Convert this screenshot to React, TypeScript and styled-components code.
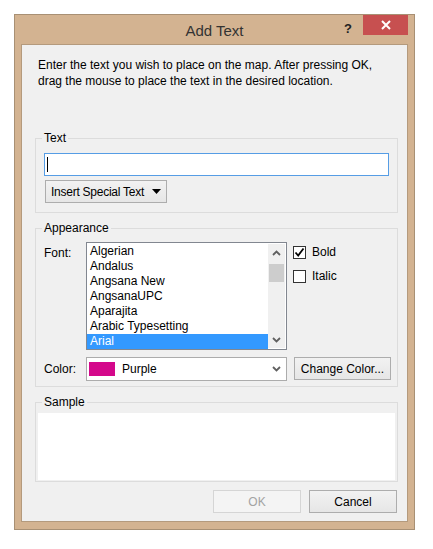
import styled, { createGlobalStyle } from "styled-components";

const GlobalStyle = createGlobalStyle`
  body {
    margin: 0;
    background: #ffffff;
    font-family: "Liberation Sans", Arial, sans-serif;
    font-size: 12px;
    color: #000;
  }
`;

const Page = styled.div`
  padding: 14px;
`;

const Window = styled.div`
  width: 401px;
  height: 516px;
  box-sizing: border-box;
  border: 1px solid #a89074;
  background: #d3b391;
  padding: 0 6px 7px;
  display: flex;
  flex-direction: column;
`;

const TitleBar = styled.div`
  height: 29px;
  display: grid;
  grid-template-columns: 1fr auto 1fr;
  align-items: center;
`;

const Title = styled.div`
  grid-column: 2;
  font-size: 15px;
  color: #333;
  margin-top: 1px;
`;

const Controls = styled.div`
  grid-column: 3;
  align-self: start;
  justify-self: end;
  display: flex;
  align-items: flex-start;
  height: 29px;
`;

const HelpButton = styled.div`
  width: 26px;
  height: 20px;
  font-weight: bold;
  font-size: 13px;
  color: #222;
  display: flex;
  align-items: center;
  justify-content: center;
  padding: 6px 4px 0 0;
  box-sizing: border-box;
`;

const CloseButton = styled.div`
  width: 45px;
  height: 20px;
  background: #c75050;
  display: flex;
  align-items: center;
  justify-content: center;
`;

const Client = styled.div`
  flex: 1;
  background: #f0f0f0;
  border: 1px solid #b49a7d;
  display: flex;
  flex-direction: column;
`;

const Description = styled.p`
  margin: 12px 20px 0 16px;
  line-height: 16px;
`;

const Group = styled.fieldset<{ $top: number }>`
  margin: ${(p) => p.$top}px 9px 0 13px;
  padding: 0;
  border: 1px solid #dcdcdc;
  min-width: 0;
`;

const Legend = styled.legend`
  margin-left: 6px;
  padding: 0 2px;
  line-height: 15px;
`;

const TextBody = styled.div`
  padding: 7px 8px 9px;
`;

const TextBox = styled.div`
  height: 23px;
  box-sizing: border-box;
  border: 1px solid #569de5;
  background: #fff;
  display: flex;
  align-items: center;
  padding-left: 2px;
`;

const Caret = styled.span`
  width: 1px;
  height: 15px;
  background: #000;
`;

const Button = styled.div<{ $disabled?: boolean }>`
  height: 23px;
  box-sizing: border-box;
  border: 1px solid ${(p) => (p.$disabled ? "#d5d5d5" : "#adadad")};
  background: ${(p) =>
    p.$disabled ? "#f4f4f4" : "linear-gradient(#f2f2f2, #e6e6e6)"};
  color: ${(p) => (p.$disabled ? "#a3a3a3" : "#000")};
  display: flex;
  align-items: center;
  justify-content: center;
  white-space: nowrap;
`;

const MenuButton = styled(Button)`
  width: 122px;
  margin: 4px 0 0 1px;
  justify-content: space-between;
  padding: 0 5px 0 5px;
  letter-spacing: -0.25px;
`;

const AppearanceBody = styled.div`
  display: grid;
  grid-template-columns: 36px 201px 1fr;
  column-gap: 6px;
  row-gap: 7px;
  padding: 6px 0 5px 8px;
`;

const FieldLabel = styled.div<{ $center?: boolean }>`
  align-self: ${(p) => (p.$center ? "center" : "start")};
  padding-top: ${(p) => (p.$center ? 0 : 4)}px;
`;

const ListBox = styled.div`
  height: 108px;
  box-sizing: border-box;
  border: 1px solid #828790;
  background: #fff;
  display: flex;
  padding: 1px 1px 1px 0;
`;

const Items = styled.div`
  flex: 1;
`;

const Item = styled.div<{ $selected?: boolean }>`
  height: 15px;
  line-height: 15px;
  padding-left: 3px;
  background: ${(p) => (p.$selected ? "#3399ff" : "transparent")};
  color: ${(p) => (p.$selected ? "#fff" : "#000")};
  white-space: nowrap;
`;

const ScrollBar = styled.div`
  width: 17px;
  background: #f0f0f0;
  display: flex;
  flex-direction: column;
  align-items: center;
`;

const ScrollArrow = styled.div`
  height: 17px;
  width: 17px;
  display: flex;
  align-items: center;
  justify-content: center;
`;

const Track = styled.div`
  flex: 1;
  width: 100%;
  padding: 3px 1px 0;
  box-sizing: border-box;
`;

const Thumb = styled.div`
  height: 18px;
  background: #cdcdcd;
`;

const Checks = styled.div`
  display: flex;
  flex-direction: column;
  gap: 10px;
  padding-top: 3px;
`;

const CheckRow = styled.div`
  display: flex;
  align-items: center;
  gap: 6px;
`;

const CheckBox = styled.div`
  width: 13px;
  height: 13px;
  box-sizing: border-box;
  border: 1px solid #333;
  background: #fff;
  display: flex;
  align-items: center;
  justify-content: center;
`;

const ComboBox = styled.div`
  height: 24px;
  box-sizing: border-box;
  border: 1px solid #acacac;
  background: #fff;
  display: flex;
  align-items: center;
  padding: 0 5px 0 2px;
  gap: 7px;
`;

const Swatch = styled.span<{ $color: string }>`
  width: 26px;
  height: 14px;
  background: ${(p) => p.$color};
`;

const ComboText = styled.span`
  flex: 1;
`;

const ColorButton = styled(Button)`
  width: 97px;
  margin-left: 1px;
`;

const SampleBody = styled.div`
  padding: 3px 2px 1px;
`;

const SampleArea = styled.div`
  height: 67px;
  background: #fff;
`;

const Footer = styled.div`
  display: flex;
  justify-content: flex-end;
  gap: 8px;
  margin: 8px 10px 0 0;
`;

const DialogButton = styled(Button)`
  width: 88px;
`;

const fonts = [
  "Algerian",
  "Andalus",
  "Angsana New",
  "AngsanaUPC",
  "Aparajita",
  "Arabic Typesetting",
  "Arial",
];

const Chevron = ({ up }: { up?: boolean }) => (
  <svg width="9" height="6" viewBox="0 0 9 6">
    <polyline
      points={up ? "1,5 4.5,1.5 8,5" : "1,1 4.5,4.5 8,1"}
      fill="none"
      stroke="#606060"
      strokeWidth="1.8"
    />
  </svg>
);

export default function App() {
  return (
    <>
      <GlobalStyle />
      <Page>
        <Window>
          <TitleBar>
            <Title>Add Text</Title>
            <Controls>
              <HelpButton>?</HelpButton>
              <CloseButton>
                <svg width="10" height="10" viewBox="0 0 10 10">
                  <path d="M1 1 L9 9 M9 1 L1 9" stroke="#fff" strokeWidth="2" />
                </svg>
              </CloseButton>
            </Controls>
          </TitleBar>
          <Client>
            <Description>
              Enter the text you wish to place on the map. After pressing OK,
              drag the mouse to place the text in the desired location.
            </Description>

            <Group $top={42}>
              <Legend>Text</Legend>
              <TextBody>
                <TextBox>
                  <Caret />
                </TextBox>
                <MenuButton>
                  Insert Special Text
                  <svg width="9" height="5" viewBox="0 0 9 5">
                    <path d="M0 0 H9 L4.5 5 Z" fill="#000" />
                  </svg>
                </MenuButton>
              </TextBody>
            </Group>

            <Group $top={8}>
              <Legend>Appearance</Legend>
              <AppearanceBody>
                <FieldLabel>Font:</FieldLabel>
                <ListBox>
                  <Items>
                    {fonts.map((f) => (
                      <Item key={f} $selected={f === "Arial"}>
                        {f}
                      </Item>
                    ))}
                  </Items>
                  <ScrollBar>
                    <ScrollArrow>
                      <Chevron up />
                    </ScrollArrow>
                    <Track>
                      <Thumb />
                    </Track>
                    <ScrollArrow>
                      <Chevron />
                    </ScrollArrow>
                  </ScrollBar>
                </ListBox>
                <Checks>
                  <CheckRow>
                    <CheckBox>
                      <svg width="11" height="11" viewBox="0 0 11 11">
                        <path
                          d="M1.5 5.5 L4.2 8.5 L9.5 1.5"
                          fill="none"
                          stroke="#000"
                          strokeWidth="1.8"
                        />
                      </svg>
                    </CheckBox>
                    Bold
                  </CheckRow>
                  <CheckRow>
                    <CheckBox />
                    Italic
                  </CheckRow>
                </Checks>

                <FieldLabel $center>Color:</FieldLabel>
                <ComboBox>
                  <Swatch $color="#d4088b" />
                  <ComboText>Purple</ComboText>
                  <Chevron />
                </ComboBox>
                <ColorButton>Change Color...</ColorButton>
              </AppearanceBody>
            </Group>

            <Group $top={8}>
              <Legend>Sample</Legend>
              <SampleBody>
                <SampleArea />
              </SampleBody>
            </Group>

            <Footer>
              <DialogButton $disabled>OK</DialogButton>
              <DialogButton>Cancel</DialogButton>
            </Footer>
          </Client>
        </Window>
      </Page>
    </>
  );
}
